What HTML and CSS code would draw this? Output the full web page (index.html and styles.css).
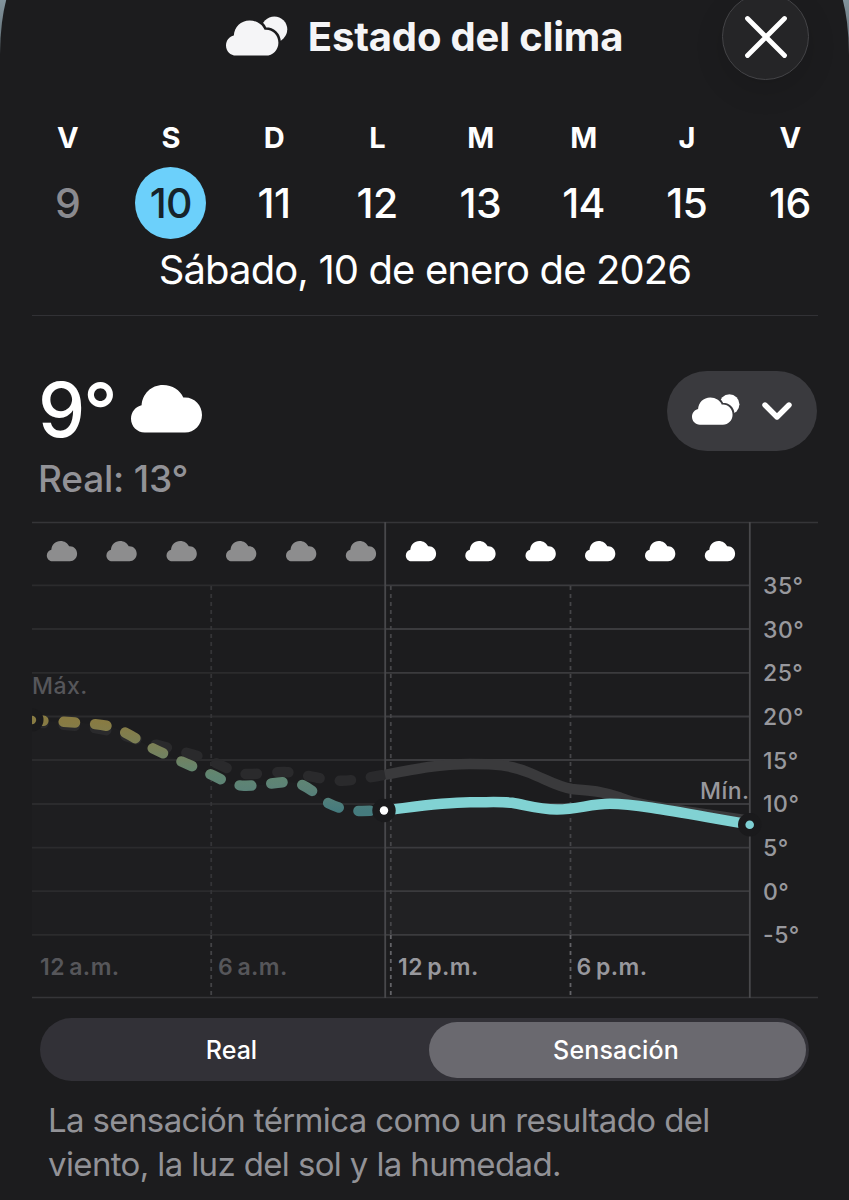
FILE: index.html
```html
<!DOCTYPE html>
<html lang="es">

<head>
    <meta charset="utf-8">
    <title>Estado del clima</title>
    <link rel="stylesheet" href="styles.css">
</head>

<body>
    <svg class="defs" width="0" height="0">
        <defs>
            <path id="cloud" d="M13.7 47.5C6 47.5 0 41.4 0 33.8C0 26.8 4.6 21.6 10.6 20.2C11.4 9 20 0 32 0C41.5 0 49 5 52.3 12.5C63 11.5 71 19.8 71 30C71 39.8 63.4 47.5 54 47.5Z" />
            <mask id="gap" maskUnits="userSpaceOnUse" x="0" y="-6" width="84" height="54">
                <rect x="0" y="-6" width="84" height="54" fill="#fff" />
                <use href="#cloud" fill="#000" stroke="#000" stroke-width="6.8" />
            </mask>
            <symbol id="cloud-sun" viewBox="0 -6 84 54">
                <circle cx="65.5" cy="12" r="17.5" mask="url(#gap)" />
                <use href="#cloud" />
            </symbol>
        </defs>
    </svg>

    <div class="sheet">
        <header class="header">
            <h1 class="title">
                <svg class="title-icon"><use href="#cloud-sun" /></svg>
                <span>Estado del clima</span>
            </h1>
            <button class="close">
                <svg width="46" height="46" viewBox="0 0 46 46"><path d="M4.5 4.5L41.5 41.5M41.5 4.5L4.5 41.5" /></svg>
            </button>
        </header>

        <div class="days">
            <div class="day past"><b>V</b><span>9</span></div>
            <div class="day selected"><b>S</b><span>10</span></div>
            <div class="day"><b>D</b><span>11</span></div>
            <div class="day"><b>L</b><span>12</span></div>
            <div class="day"><b>M</b><span>13</span></div>
            <div class="day"><b>M</b><span>14</span></div>
            <div class="day"><b>J</b><span>15</span></div>
            <div class="day"><b>V</b><span>16</span></div>
        </div>
        <div class="date"><span>Sábado, 10 de enero de 2026</span></div>

        <main class="content">
            <div class="now">
                <div>
                    <div class="temp">
                        <span>9°</span>
                        <svg width="71" height="48" viewBox="0 0 71 48"><use href="#cloud" /></svg>
                    </div>
                    <div class="real">Real: 13°</div>
                </div>
                <button class="picker">
                    <svg class="picker-icon"><use href="#cloud-sun" /></svg>
                    <svg class="chevron" width="30" height="20" viewBox="0 0 30 20"><path d="M3 4L15 16L27 4" /></svg>
                </button>
            </div>

            <svg class="chart" width="786" height="478" viewBox="32 521 786 478">
                <defs>
                    <linearGradient id="past-line" gradientUnits="userSpaceOnUse" x1="0" y1="722" x2="0" y2="811">
                        <stop offset="0" stop-color="#887b43" />
                        <stop offset="0.3" stop-color="#79815a" />
                        <stop offset="0.6" stop-color="#608672" />
                        <stop offset="0.75" stop-color="#5c8277" />
                        <stop offset="1" stop-color="#457b7e" />
                    </linearGradient>
                </defs>

                <!-- area under the curve -->
                <path class="area-past" d="M32 720C60 722 90 722.5 108 726C122 729 138 740 150 747C170 757 188 764 205 772C220 778 230 785.5 244 785.7C262 786 275 782 290 782C305 782 316 795 328 803C340 809 350 811 362 811L384 810.5V935H32Z" />
                <path class="area" d="M384 810.5C410 807.5 440 802.5 470 802.3C490 802.3 500 801.5 512 802.8C528 805.5 538 809.3 557 809.5C578 809.5 590 803.8 610 803.8C640 804 690 814.5 750 824.5V935H384Z" />

                <!-- grid -->
                <path class="rule" d="M32 522.5H818M32 997.5H818" />
                <path class="grid-past" d="M32 585.3H385M32 629H385M32 672.8H385M32 716.5H385M32 760H385M32 804H385M32 847.6H385M32 891.2H385M32 934.8H385" />
                <path class="grid" d="M385 585.3H750M385 629H750M385 672.8H750M385 716.5H750M385 760H750M385 804H750M385 847.6H750M385 891.2H750M385 934.8H750" />
                <path class="dots-past" d="M211.2 586V935" />
                <path class="dots" d="M390.8 586V935M570.5 586V935" />
                <path class="dots-past low" d="M211.2 935V996" />
                <path class="dots low" d="M390.8 935V996M570.5 935V996" />
                <path class="axis" d="M385.2 522V998M749.8 522V998" />

                <g class="icons-past">
                    <use href="#cloud" transform="translate(46.8 541) scale(.427)" />
                    <use href="#cloud" transform="translate(106.4 541) scale(.427)" />
                    <use href="#cloud" transform="translate(166.5 541) scale(.427)" />
                    <use href="#cloud" transform="translate(226 541) scale(.427)" />
                    <use href="#cloud" transform="translate(286 541) scale(.427)" />
                    <use href="#cloud" transform="translate(345.8 541) scale(.427)" />
                </g>
                <g class="icons">
                    <use href="#cloud" transform="translate(405.8 541) scale(.427)" />
                    <use href="#cloud" transform="translate(465.3 541) scale(.427)" />
                    <use href="#cloud" transform="translate(525.5 541) scale(.427)" />
                    <use href="#cloud" transform="translate(585 541) scale(.427)" />
                    <use href="#cloud" transform="translate(645 541) scale(.427)" />
                    <use href="#cloud" transform="translate(704.8 541) scale(.427)" />
                </g>

                <!-- real temperature -->
                <path class="line real-past" d="M32 722C60 725 90 726 110 731C135 739 160 746 185 752.5C205 757 222 766 235 772C246 777 270 771.5 285 772C300 773 325 781 342 780.7C355 780.5 370 777 385 774.8" />
                <path class="line real-line" d="M385 774.8C415 769 440 764 470 764C495 764 510 764.5 530 773C548 780.5 558 787 572 789C590 791 600 790.5 620 797.5C640 805.5 655 806.5 690 812L745 820" />

                <!-- feels like -->
                <path class="line feel-past" d="M32 720C60 722 90 722.5 108 726C122 729 138 740 150 747C170 757 188 764 205 772C220 778 230 785.5 244 785.7C262 786 275 782 290 782C305 782 316 795 328 803C340 809 350 811 362 811L384 810.5" />
                <path class="line feel" d="M384 810.5C410 807.5 440 802.5 470 802.3C490 802.3 500 801.5 512 802.8C528 805.5 538 809.3 557 809.5C578 809.5 590 803.8 610 803.8C640 804 690 814.5 750 824.5" />

                <circle class="ring" cx="32" cy="720" r="11.5" />
                <circle cx="32" cy="720" r="4.2" fill="#887b43" />
                <circle class="ring" cx="384" cy="810.5" r="11.7" />
                <circle cx="384" cy="810.5" r="4.2" fill="#fff" />
                <circle class="ring" cx="749.7" cy="824.7" r="11.7" />
                <circle cx="749.7" cy="824.7" r="4.3" fill="#7fd0d4" />

                <g class="label">
                    <text x="763" y="594">35°</text>
                    <text x="763" y="637.6">30°</text>
                    <text x="763" y="681.3">25°</text>
                    <text x="763" y="725">20°</text>
                    <text x="763" y="768.7">15°</text>
                    <text x="763" y="812.4">10°</text>
                    <text x="763" y="856">5°</text>
                    <text x="763" y="899.7">0°</text>
                    <text x="763" y="943.3">-5°</text>
                    <text x="700" y="799">Mín.</text>
                    <text class="hour" x="398" y="975">12&#8201;p.m.</text>
                    <text class="hour" x="576.5" y="975">6&#8201;p.m.</text>
                </g>
                <g class="label dim">
                    <text x="32" y="694">Máx.</text>
                    <text class="hour" x="40" y="975">12&#8201;a.m.</text>
                    <text class="hour" x="218" y="975">6&#8201;a.m.</text>
                </g>
            </svg>

            <div class="segmented">
                <button class="segment">Real</button>
                <button class="segment active">Sensación</button>
            </div>
            <p class="note">La sensación térmica como un resultado del<br>viento, la luz del sol y la humedad.</p>
        </main>
    </div>
</body>

</html>
```
FILE: styles.css
```css
* {
    box-sizing: border-box;
}

body {
    margin: 0;
    height: 1200px;
    overflow: hidden;
    background: linear-gradient(#82939c, #5b676e 60px);
    color: #fff;
    font-family: Inter, "Liberation Sans", sans-serif;
}

svg {
    display: block;
    flex: none;
    fill: currentColor;
}

button {
    border: none;
    padding: 0;
    color: #fff;
    font: inherit;
}

.defs {
    position: absolute;
}

.sheet {
    margin-top: -30px;
    padding-top: 30px;
    height: 1230px;
    background: #1c1c1e;
    border-radius: 26px 26px 0 0 / 85px 85px 0 0;
}

.header {
    display: grid;
    grid-template-columns: 1fr auto 1fr;
    grid-template-rows: 73px;
    align-items: center;
    height: 74px;
    padding: 0 40px;
}

.title {
    grid-column: 2;
    display: flex;
    align-items: center;
    gap: 20px;
    margin: 0;
    font-size: 40px;
    font-weight: 700;
    letter-spacing: -0.18px;
    line-height: 48px;
    color: #f5f5f7;
}

.title-icon {
    width: 62px;
    height: 40px;
    margin-bottom: 2px;
}

.close {
    justify-self: end;
    display: flex;
    align-items: center;
    justify-content: center;
    width: 87px;
    height: 87px;
    border: 1.5px solid #444447;
    border-radius: 50%;
    background: #252527;
    box-shadow: 0 10px 30px rgba(0, 0, 0, 0.12);
}

.close path {
    fill: none;
    stroke: #fff;
    stroke-width: 4.8;
    stroke-linecap: round;
}

.days {
    display: grid;
    grid-template-columns: repeat(8, 1fr);
    padding: 48px 7.5px 0 16px;
}

.day {
    display: flex;
    flex-direction: column;
    align-items: center;
    gap: 13px;
    font-size: 41px;
    font-weight: 500;
    letter-spacing: -0.6px;
}

.day b {
    font-size: 29px;
    font-weight: 700;
    line-height: 32px;
}

.day span {
    width: 71px;
    height: 72px;
    border-radius: 50%;
    line-height: 72px;
    text-align: center;
}

.past span {
    color: #8a8a8f;
}

.selected span {
    background: #6cd0fb;
    color: #16232b;
}

.date {
    height: 77px;
    margin: 0 31px 0 32px;
    border-bottom: 1.5px solid #313135;
    padding-top: 6px;
    text-align: center;
    font-size: 40px;
    line-height: 50px;
    letter-spacing: -0.88px;
}

.content {
    padding: 0 32px;
}

.now {
    display: flex;
    justify-content: space-between;
    align-items: flex-start;
    height: 205px;
    padding: 55px 0 0 6px;
}

.temp {
    display: flex;
    align-items: center;
    gap: 15px;
    height: 76px;
    font-size: 75px;
    font-weight: 500;
    letter-spacing: -2px;
}

.real {
    margin-top: 9px;
    font-size: 37px;
    font-weight: 500;
    line-height: 46px;
    letter-spacing: -0.2px;
    color: #929297;
}

.picker {
    display: flex;
    align-items: center;
    gap: 22px;
    width: 150px;
    height: 80px;
    padding-left: 25px;
    border-radius: 40px;
    background: #3a3a3e;
}

.picker-icon {
    width: 48px;
    height: 31px;
    margin-bottom: 3px;
}

.chevron path {
    fill: none;
    stroke: #fff;
    stroke-width: 5.4;
    stroke-linecap: round;
    stroke-linejoin: round;
}

/* chart */
.area {
    fill: #212123;
}

.area-past {
    fill: #1e1e20;
}

.rule, .grid, .grid-past, .axis, .dots, .dots-past, .line {
    fill: none;
}

.rule {
    stroke: #353538;
    stroke-width: 1.3;
}

.grid {
    stroke: #3b3b3e;
    stroke-width: 1.8;
}

.grid-past {
    stroke: #2b2b2d;
    stroke-width: 1.8;
}

.axis {
    stroke: #48484b;
    stroke-width: 1.8;
}

.dots, .dots-past {
    stroke: #454548;
    stroke-width: 1.8;
    stroke-dasharray: 4 4;
}

.dots-past {
    stroke: #343437;
}

.dots.low {
    stroke: #636367;
}

.dots-past.low {
    stroke: #434346;
}

.icons {
    fill: #fff;
}

.icons-past {
    fill: #8d8d8e;
}

.line {
    stroke-width: 10.5;
}

.real-past, .feel-past {
    stroke-linecap: round;
    stroke-dasharray: 11.4 20.2;
}

.real-past {
    stroke: #2a2a2c;
}

.real-line {
    stroke: #3a3a3c;
}

.feel-past {
    stroke: url(#past-line);
}

.feel {
    stroke: #81d2d3;
}

.ring {
    fill: #1a1a1c;
}

.label {
    fill: #98989d;
    font-size: 23px;
    font-weight: 500;
    letter-spacing: 0.5px;
}

.hour {
    font-weight: 600;
    letter-spacing: 0.45px;
}

.dim {
    fill: #56565a;
}

/* Real / Sensación switch */
.segmented {
    display: grid;
    grid-template-columns: 385px 377px;
    justify-content: end;
    align-items: center;
    width: 769px;
    height: 63px;
    margin: 19px 0 0 8px;
    padding-right: 3.5px;
    border-radius: 32px;
    background: #323137;
}

.segment {
    height: 56px;
    padding-right: 9px;
    border-radius: 28px;
    background: none;
    font-size: 25px;
    font-weight: 500;
}

.segment.active {
    padding-right: 2px;
    background: #6a696f;
    letter-spacing: 0.15px;
}

.note {
    margin: 17px 0 0 16px;
    font-size: 33px;
    line-height: 44px;
    letter-spacing: -0.63px;
    white-space: nowrap;
    color: #929297;
}
```
